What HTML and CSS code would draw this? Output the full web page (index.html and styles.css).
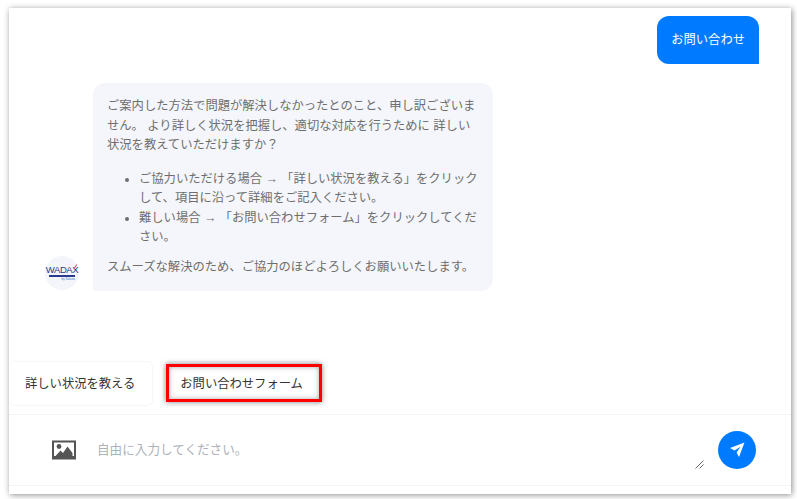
FILE: index.html
```html
<!DOCTYPE html>
<html lang="ja">
<head>
<meta charset="utf-8" />
<title>お問い合わせ</title>
<link rel="stylesheet" href="styles.css">
</head>
<body>
	<div class="panel">
		<div class="messages">
			<div class="userRow">
				<div class="userMsg">お問い合わせ</div>
			</div>
			<div class="botRow">
				<div class="avatar">
					<span class="logoName">WADAX</span>
					<span class="logoSlash"></span>
					<span class="logoBar"></span>
					<span class="logoSub">by Sakura</span>
				</div>
				<div class="botMsg">
					<p>ご案内した方法で問題が解決しなかったとのこと、申し訳ございません。 より詳しく状況を把握し、適切な対応を行うために 詳しい状況を教えていただけますか？</p>
					<ul>
						<li>ご協力いただける場合 → 「詳しい状況を教える」をクリックして、項目に沿って詳細をご記入ください。</li>
						<li>難しい場合 → 「お問い合わせフォーム」をクリックしてください。</li>
					</ul>
					<p>スムーズな解決のため、ご協力のほどよろしくお願いいたします。</p>
				</div>
			</div>
		</div>
		<div class="choices">
			<div class="choice first">詳しい状況を教える</div>
			<div class="choice marked">お問い合わせフォーム</div>
		</div>
		<div class="inputRow">
			<svg class="imageIcon" width="24" height="20" viewBox="0 0 24 20">
				<path fill="#555" fill-rule="evenodd" d="M0 0.500h24v19H0zM2 2.500v13.500h20V2.500z"/>
				<circle cx="7" cy="6.500" r="2.400" fill="#555"/>
				<path fill="#555" d="M3.500 16l5-5.500 2.500 2.500 4.500-6.500 5 6.500V16z"/>
			</svg>
			<div class="inputBox">
				<span class="placeholder">自由に入力してください。</span>
				<svg class="grip" width="9" height="9" viewBox="0 0 9 9">
					<path stroke="#666" stroke-width="1" d="M0.500 8.500L8.500 0.500M4.500 8.500L8.500 4.500"/>
				</svg>
			</div>
			<div class="sendBtn">
				<svg width="16" height="16" viewBox="0 0 16 16">
					<path fill="#fff" d="M15.500 0.500L10 15 7.600 10.600 11.500 4.800 5.500 8.500 1 6z"/>
				</svg>
			</div>
		</div>
		<div class="bottomStrip"></div>
	</div>
</body>
</html>
```

FILE: styles.css
```css
body, div, p, ul {padding:0; margin:0;}
body {background: #fff; font-family: "Liberation Sans", "Noto Sans CJK JP", sans-serif; font-size: 12.3px; height: 499px; overflow: hidden;}

.panel {width: 782px; height: 486px; margin: 8px 0 0 9px; background: #fff; box-shadow: 1px 1px 6px rgba(0,0,0,.45); display: flex; flex-direction: column;}

.messages {flex: 1; padding: 8px 32px 0 36px; display: flex; flex-direction: column;}
.userRow {display: flex; justify-content: flex-end;}
.userMsg {background: #007bff; color: #fff; line-height: 47px; padding: 1px 14px 0; border-radius: 12px 12px 0 12px;}

.botRow {display: flex; align-items: flex-end; gap: 14px; margin-top: 19px;}
.avatar {width: 34px; height: 34px; border-radius: 50%; background: #f3f5fa; display: flex; flex-direction: column; align-items: center; justify-content: center; margin-bottom: 1px; color: #2b3a8c; position: relative;}
.logoName {font-size: 9.5px; line-height: 10px; letter-spacing: -.4px;}
.logoSlash {position: absolute; right: 3px; top: 8px; width: 1px; height: 5px; background: #e0536e; transform: rotate(35deg);}
.logoBar {width: 26px; height: 2px; background: #2b3a8c;}
.logoSub {font-size: 3px; line-height: 4px; color: #3a78c8; align-self: flex-end; margin-right: 4px;}

.botMsg {width: 372px; padding: 14px 14px 14px; background: #f4f6fb; border-radius: 12px 12px 12px 0; color: #6e6e6e; line-height: 19.5px;}
.botMsg ul {margin: 14px 0 10px; padding-left: 32px;}

.choices {display: flex; gap: 10px; height: 45px; margin-bottom: 8px;}
.choice {border: 1px solid #f5f6f9; border-radius: 6px; color: #333; line-height: 45px; padding: 0 16px; position: relative; height: 43px;}
.choice.first {border-left: 0; padding-right: 17px;}
.marked::after {content: ""; position: absolute; left: 2px; top: 2px; width: 150px; height: 32px; border: 3px solid #f00; box-shadow: 0 0 5px rgba(0,0,0,.5), inset 0 0 5px rgba(0,0,0,.35);}

.inputRow {height: 70px; border-top: 1px solid #f3f4f7; border-bottom: 1px solid #f3f4f7; display: flex; align-items: center; padding: 0 35px 0 43px; box-sizing: content-box;}
.imageIcon {flex: none; margin-right: 21px;}
.inputBox {flex: 1; height: 54px; position: relative; color: #adb1b8; line-height: 54px; font-size: 12.6px;}
.placeholder {display: block;}
.grip {position: absolute; right: 14px; bottom: 8px;}
.sendBtn {width: 38px; height: 38px; border-radius: 50%; background: #007bff; display: flex; align-items: center; justify-content: center; flex: none;}

.bottomStrip {height: 8px;}
```
